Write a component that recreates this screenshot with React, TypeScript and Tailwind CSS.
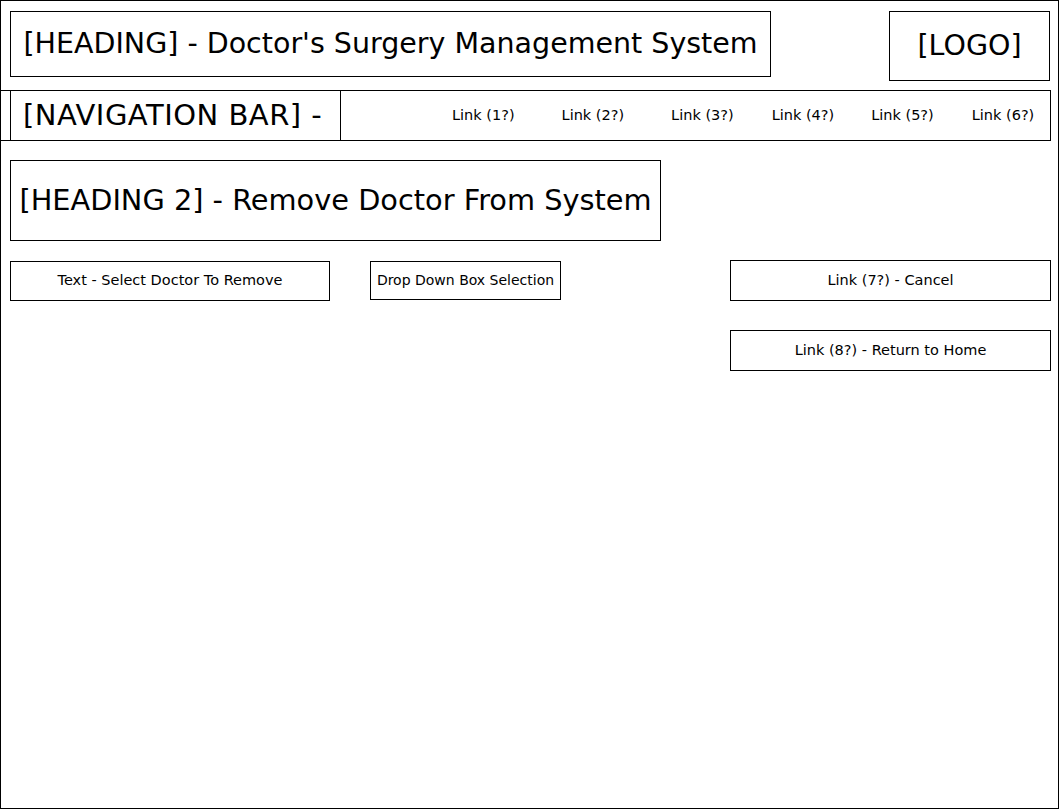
import React from 'react';

const font = { fontFamily: '"DejaVu Sans", Verdana, sans-serif' };

const Box: React.FC<{ className?: string; children?: React.ReactNode }> = ({ className = '', children }) => (
  <div className={`flex items-center justify-center border border-black bg-white text-black ${className}`}>
    {children}
  </div>
);

export default function App() {
  const links = [
    { label: 'Link (1?)', cls: 'ml-[111px]' },
    { label: 'Link (2?)', cls: 'ml-[47px]' },
    { label: 'Link (3?)', cls: 'ml-[47px]' },
    { label: 'Link (4?)', cls: 'ml-[38px]' },
    { label: 'Link (5?)', cls: 'ml-[37px]' },
    { label: 'Link (6?)', cls: 'ml-[38px]' },
  ];

  return (
    <div className="w-[1061px] h-[811px] bg-white" style={font}>
      <div className="w-[1059px] h-[809px] box-border border border-black">
        {/* header row */}
        <div className="flex pt-[10px] pl-[9px] pr-[8px]">
          <Box className="w-[761px] h-[66px] text-[28.5px]">
            [HEADING] - Doctor's Surgery Management System
          </Box>
          <Box className="ml-auto w-[161px] h-[70px] text-[28.5px]">[LOGO]</Box>
        </div>

        {/* nav bar */}
        <div className="mt-[9px] -ml-px w-[1051px] h-[51px] flex border-y border-r border-black">
          <div className="ml-[10px] w-[331px] h-full flex items-center pl-[12px] border-x border-black text-[29px] tracking-[0.5px]">
            [NAVIGATION BAR] -
          </div>
          <div className="flex items-center text-[14.5px]">
            {links.map((l) => (
              <span key={l.label} className={`whitespace-nowrap ${l.cls}`}>{l.label}</span>
            ))}
          </div>
        </div>

        {/* heading 2 */}
        <div className="mt-[19px] pl-[9px]">
          <Box className="w-[651px] h-[81px] text-[28.8px]">[HEADING 2] - Remove Doctor From System</Box>
        </div>

        {/* content rows */}
        <div className="flex pl-[9px] mt-[19px] text-[14.5px]">
          <Box className="mt-[1px] w-[320px] h-[40px]">Text - Select Doctor To Remove</Box>
          <Box className="mt-[1px] ml-[40px] w-[191px] h-[39px] text-[14px]">Drop Down Box Selection</Box>
          <div className="ml-[169px] flex flex-col gap-[29px]">
            <Box className="w-[321px] h-[41px]">Link (7?) - Cancel</Box>
            <Box className="w-[321px] h-[41px]">Link (8?) - Return to Home</Box>
          </div>
        </div>
      </div>
    </div>
  );
}
